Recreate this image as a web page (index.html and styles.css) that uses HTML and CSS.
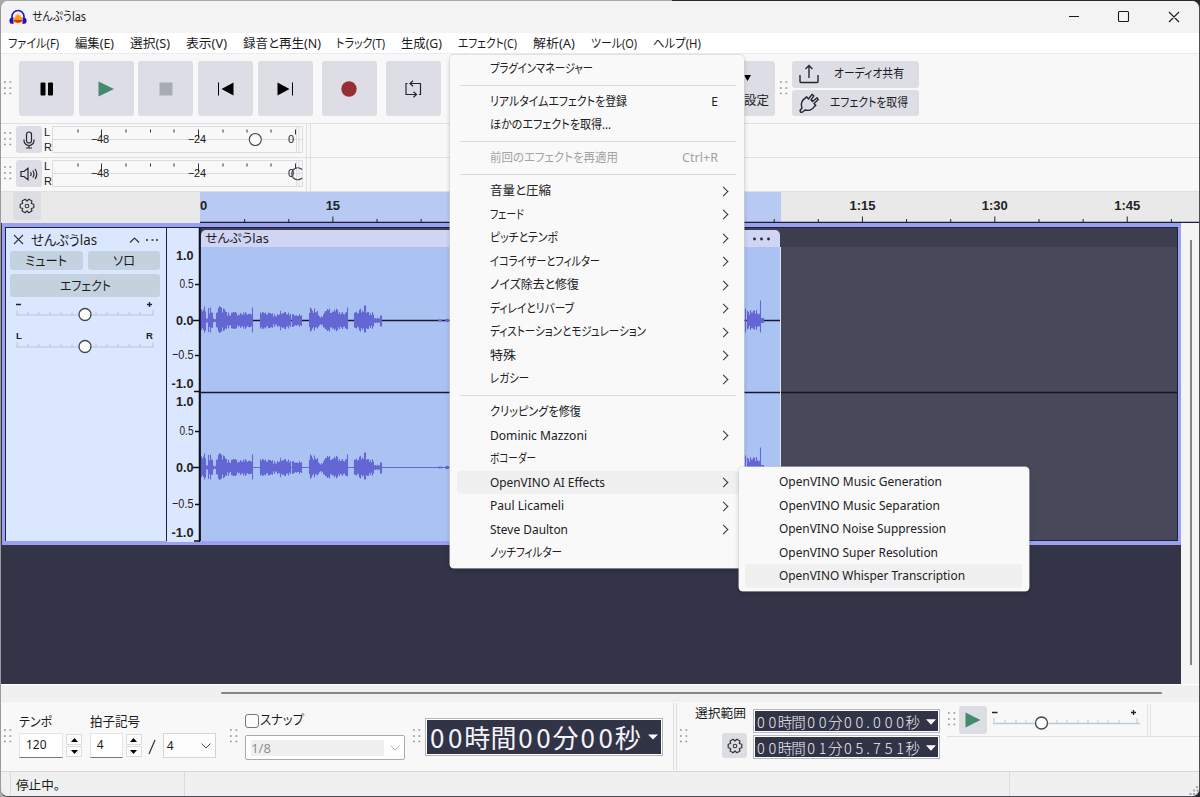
FILE: index.html
```
<!DOCTYPE html>
<html lang="ja">
<head>
<meta charset="utf-8">
<title>せんぷうlas</title>
<link rel="stylesheet" href="styles.css">
</head>
<body>
<svg class="defs" width="0" height="0">
  <symbol id="gear" viewBox="-8 -8 16 16"><path d="M6.8-1.7V1.7L4.3 2.5L4.9 5L1.9 6.7L0 5L-1.9 6.7L-4.9 5L-4.3 2.5L-6.8 1.7V-1.7L-4.3-2.5L-4.9-5L-1.9-6.7L0-5L1.9-6.7L4.9-5L4.3-2.5Z" fill="none" stroke="#33343c" stroke-width="1.2" stroke-linejoin="round"/><circle r="1.8" fill="none" stroke="#33343c" stroke-width="1.1"/></symbol>
  <symbol id="grip" viewBox="0 0 8 14"><path d="M0 1h1.700M5.500 1h1.700M0 7h1.700M5.500 7h1.700M0 12.500h1.700M5.500 12.500h1.700" stroke="#8d8f99" stroke-width="1.7"/></symbol>
</svg>
<div class="window">
  <header class="titlebar">
    <svg class="logo" width="18" height="16" viewBox="0 0 18 16"><path d="M3 10V7.500A6 6 0 0 1 15 7.500V10" fill="none" stroke="#1a1ad6" stroke-width="1.700"/><path d="M4.500 8.500v6.500l-3-.5C0 13.500 0 10 1.500 9zM13.500 8.500v6.500l3-.5c1.500-1 1.500-4.500 0-5.500z" fill="#1515c8"/><path d="M4 11l1-3 1 1 1-4 1 2 1-3 1.200 3 1-2 .8 4 1-1 1 3-1 2-2 1H7l-2-1z" fill="#fb9a13"/><path d="M4 11h10l-1.500 1.500-2 .5-1.500 1-1.500-1-2-.5z" fill="#e42b12"/></svg>
    <span class="fit title" data-w="54">せんぷうlas</span>
    <svg class="winctl" width="112" height="14" viewBox="0 0 112 14"><path d="M1 6.500h10M50.500 2.500q0-1 1-1h8q1 0 1 1v8q0 1-1 1h-8q-1 0-1-1zM101 2l10 10M111 2l-10 10" fill="none" stroke="#1a1a1a" stroke-width="1.100"/></svg>
  </header>
  <nav class="menubar">
    <span class="fit" data-w="51">ファイル(F)</span><span class="fit" data-w="39">編集(E)</span><span class="fit" data-w="40">選択(S)</span><span class="fit" data-w="41">表示(V)</span><span class="fit" data-w="78">録音と再生(N)</span><span class="fit" data-w="49">トラック(T)</span><span class="fit" data-w="41">生成(G)</span><span class="fit" data-w="59">エフェクト(C)</span><span class="fit" data-w="42">解析(A)</span><span class="fit" data-w="46">ツール(O)</span><span class="fit" data-w="48">ヘルプ(H)</span>
  </nav>
  <section class="toolbar">
    <svg class="grip" width="8" height="14"><use href="#grip"/></svg>
    <div class="transport">
      <button class="tool"><svg width="16" height="16"><rect x="1.500" y="1.500" width="5" height="13" rx="1"/><rect x="9" y="1.500" width="5" height="13" rx="1"/></svg></button>
      <button class="tool"><svg width="16" height="16"><path d="M.5.500 16 8 .5 15.500z" fill="#46896c"/></svg></button>
      <button class="tool"><svg width="14" height="14"><rect x=".5" y=".5" width="13" height="13" fill="#a7abb5"/></svg></button>
      <button class="tool"><svg width="18" height="14"><path d="M1.500 .5v13" stroke="#000"/><path d="M16.500 .5v13L4.500 7z"/></svg></button>
      <button class="tool"><svg width="18" height="14"><path d="M16.500 .5v13" stroke="#000"/><path d="M1.500 .5v13L13.500 7z"/></svg></button>
      <button class="tool rec"><svg width="16" height="16"><circle cx="8" cy="8" r="7.700" fill="#952f35"/></svg></button>
      <button class="tool loop"><svg width="18" height="18" viewBox="0 0 18 18" fill="none" stroke="#26272e" stroke-width="1.200"><path d="M3.500 3.500H2V14.500H12M15 14.500h1.500V3.500H6M9 .8 6 3.500l3 2.700M9.500 11.800l3 2.700-3 2.700"/></svg></button>
    </div>
    <svg class="grip" width="8" height="14"><use href="#grip"/></svg>
    <div class="setup"><svg width="7" height="6"><path d="M0 0h7L3.500 6z"/></svg><span class="fit" data-w="25">設定</span></div>
    <svg class="grip grip-share" width="8" height="14"><use href="#grip"/></svg>
    <div class="share">
      <div class="sharebtn"><svg width="20" height="20" viewBox="0 0 20 20" fill="none" stroke="#25262c" stroke-width="1.400"><path d="M1 11v6.500q0 1 1 1h16q1 0 1-1V11M10 14V1.500M6.500 5 10 1.500 13.500 5"/></svg><span class="fit" data-w="70">オーディオ共有</span></div>
      <div class="sharebtn"><svg width="20" height="20" viewBox="0 0 20 20" fill="none" stroke="#25262c" stroke-width="1.400" stroke-linejoin="round"><path d="M1 17.500 3 15C1.500 11 3 6.500 6.500 5L7.500 3.800 9.500 6 13 1.300 14.800 2.800 12 6.800 13.500 8.500 18 4.800 19.300 6.600 15 10.500 16.800 12.500 15.500 13.300C13.500 16.500 9.500 18 6 17L3.200 19.200Q1.500 20 1 17.500Z"/></svg><span class="fit" data-w="78">エフェクトを取得</span></div>
    </div>
  </section>
  <section class="meterrow">
    <svg class="grip" width="8" height="14"><use href="#grip"/></svg>
    <span class="mbtn"><svg width="14" height="18" viewBox="0 0 14 18" fill="none" stroke="#25262c" stroke-width="1.200"><rect x="4.500" y="1" width="5" height="11" rx="2.500"/><path d="M2 8.500v1A5 5 0 0 0 12 9.500v-1M7 14.500v2.500M4 17h6"/></svg></span>
    <svg class="meter" width="260" height="33"><circle cx="211.300" cy="15.500" r="6" fill="#fbfbfb" stroke="#444" stroke-width="1.100"/></svg>
    <span class="rowend"></span>
  </section>
  <section class="meterrow">
    <svg class="grip" width="8" height="14"><use href="#grip"/></svg>
    <span class="mbtn"><svg width="18" height="14" viewBox="0 0 18 14" fill="none" stroke="#25262c" stroke-width="1.200"><path d="M1 4.500h3L8 1.300v11.400L4 9.500H1zM10.500 5q1.300 2 0 4M12.800 3.500q2.400 3.500 0 7M15 2q3.600 5 0 10"/></svg></span>
    <svg class="meter" width="260" height="33"><path d="M258 11.500A6 6 0 1 0 258 20" fill="none" stroke="#444" stroke-width="1.200"/></svg>
    <span class="rowend"></span>
  </section>
  <section class="timeline">
    <span class="gearbtn"><svg width="16" height="16"><use href="#gear"/></svg></span>
    <svg id="ruler" class="ruler" width="999" height="31"><rect width="581" height="30" fill="#b8c9f4"/></svg>
  </section>
  <section class="workspace">
    <div class="canvas">
      <div class="track">
        <aside class="panel">
          <div class="phead"><svg width="11" height="11"><path d="M1 1l9 9M10 1l-9 9" stroke="#333640" stroke-width="1.100"/></svg><span class="fit" data-w="66">せんぷうlas</span><svg class="more" width="30" height="10"><path d="M2 7.500 6.500 3 11 7.500" fill="none" stroke="#333640" stroke-width="1.200"/><path d="M18 5h2M23.500 5h2M28 5h2" stroke="#555963" stroke-width="1.800"/></svg></div>
          <div class="pair"><span class="pbtn"><b class="fit" data-w="42">ミュート</b></span><span class="pbtn"><b class="fit" data-w="22">ソロ</b></span></div>
          <div class="pbtn wide"><b class="fit" data-w="51">エフェクト</b></div>
          <svg width="150" height="60" viewBox="0 0 150 60"><g font-family="Liberation Sans, sans-serif" font-size="9.500" font-weight="bold" fill="#222"><text x="6" y="42">L</text><text x="136" y="42">R</text></g><path d="M6 7.500h5M137 7.500h5M139.500 5v5" stroke="#222" stroke-width="1.300"/><path d="M6 18h138M6 50h138M7 13v5M18 15v3M29 15v3M40 15v3M51 15v3M62 15v3M86 15v3M97 15v3M108 15v3M119 15v3M130 15v3M143 13v5M7 45v5M18 47v3M29 47v3M40 47v3M51 47v3M62 47v3M86 47v3M97 47v3M108 47v3M119 47v3M130 47v3M143 45v5" stroke="#bcc7d1" stroke-width="1"/><g fill="#fdfdf8" stroke="#444851" stroke-width="1.300"><circle cx="75" cy="17.500" r="6"/><circle cx="75" cy="49.500" r="6"/></g></svg>
        </aside>
        <svg id="vscale" class="vscale" width="33" height="314" viewBox="0 228 33 314"></svg>
        <div class="wavearea">
          <div class="clip"><div class="cliphead"><span class="fit" data-w="64">せんぷうlas</span><svg width="18" height="4"><path d="M1.500 2h.01M8.500 2h.01M15.500 2h.01" stroke="#252735" stroke-width="2.800" stroke-linecap="round"/></svg></div>
          <svg id="wave" width="579" height="294" viewBox="201 247 579 294"></svg></div>
          <svg class="rest" width="397" height="314"><path d="M0 164.500h397" stroke="#17181f" stroke-width="1.500"/><path d="M.5 19v295" stroke="#e4e5ea"/></svg>
        </div>
      </div>
    </div>
    <div class="vscroll"><i></i></div>
  </section>
  <div class="hscroll"><i></i></div>
  <section class="bottombar">
    <svg class="grip" width="8" height="14"><use href="#grip"/></svg>
    <div class="group tempo"><label class="fit" data-w="33">テンポ</label><div class="line"><span class="num">120</span><span class="spin"><i><svg width="7" height="4"><path d="M0 4h7L3.500 0z"/></svg></i><i><svg width="7" height="4"><path d="M0 0h7L3.500 4z"/></svg></i></span></div></div>
    <div class="group sign"><label class="fit" data-w="50">拍子記号</label><div class="line"><span class="num n4">4</span><span class="spin"><i><svg width="7" height="4"><path d="M0 4h7L3.500 0z"/></svg></i><i><svg width="7" height="4"><path d="M0 0h7L3.500 4z"/></svg></i></span><svg class="slash" width="8" height="18"><path d="M1 16 7 2" stroke="#333" stroke-width="1.200"/></svg><span class="select">4<svg width="10" height="6"><path d="M.5.500 5 5 9.500.500" fill="none" stroke="#555"/></svg></span></div></div>
    <svg class="grip g2" width="8" height="14"><use href="#grip"/></svg>
    <div class="group snap"><div class="check"><i></i><span class="fit" data-w="44">スナップ</span></div><div class="combo"><span>1/8</span><svg width="10" height="6"><path d="M.5.500 5 5 9.500.500" fill="none" stroke="#bbb"/></svg></div></div>
    <svg class="grip g3" width="8" height="14"><use href="#grip"/></svg>
    <div class="bigtime"><span class="cells">00時間00分00秒</span><svg width="10" height="6"><path d="M0 .5h10L5 5.500z" fill="#fff"/></svg></div>
    <div class="divider"></div>
    <svg class="grip g4" width="8" height="14"><use href="#grip"/></svg>
    <div class="selgroup"><span class="fit" data-w="51">選択範囲</span><span class="sgear"><svg width="16" height="16"><use href="#gear"/></svg></span></div>
    <div class="times"><div class="smalltime"><span class="cells">00時間00分00.000秒</span><svg width="10" height="6"><path d="M0 .2h10L5 5.800z" fill="#fff"/></svg></div><div class="smalltime"><span class="cells">00時間01分05.751秒</span><svg width="10" height="6"><path d="M0 .2h10L5 5.800z" fill="#fff"/></svg></div></div>
    <div class="speed">
      <svg class="grip" width="8" height="14"><use href="#grip"/></svg>
      <span class="pplay"><svg width="16" height="16"><path d="M.5.500 15.500 8 .5 15.500z" fill="#46896c"/></svg></span>
      <svg class="spslider" width="150" height="28"><path d="M2 8.500h5.500M141 8.500h5M143.500 6v5" stroke="#222" stroke-width="1.300"/><path d="M3 19.500h147" stroke="#b9cbe0" stroke-width="1.500"/><path d="M4 14v5M15 16v3M26 16v3M36 16v3M67 16v3M77 16v3M88 16v3M98 16v3M108 16v3M118 16v3M129 16v3M147 14v5" stroke="#b9cbe0"/><circle cx="51.500" cy="19" r="6" fill="#fdfdfd" stroke="#444" stroke-width="1.300"/></svg>
      <span class="spend"></span>
    </div>
  </section>
  <footer class="status"><span class="msg"><span class="fit" data-w="44">停止中。</span></span><span class="s2"></span><svg class="resize" width="10" height="10"><path d="M7 1h2M4 4.500h2M7.500 4.500h2M.5 8h2M4 8h2M7.500 8h2" stroke="#aaa" stroke-width="2"/></svg></footer>
</div>

<div class="popup main">
  <div class="item"><span class="fit" data-w="103">プラグインマネージャー</span></div>
  <hr>
  <div class="item"><span class="fit" data-w="137">リアルタイムエフェクトを登録</span><kbd>E</kbd></div>
  <div class="item"><span class="fit" data-w="121">ほかのエフェクトを取得...</span></div>
  <hr>
  <div class="item off"><span class="fit" data-w="128">前回のエフェクトを再適用</span><kbd class="fit" data-w="36">Ctrl+R</kbd></div>
  <hr>
  <div class="item sub"><span class="fit" data-w="61">音量と圧縮</span></div>
  <div class="item sub"><span class="fit" data-w="34">フェード</span></div>
  <div class="item sub"><span class="fit" data-w="68">ピッチとテンポ</span></div>
  <div class="item sub"><span class="fit" data-w="110">イコライザーとフィルター</span></div>
  <div class="item sub"><span class="fit" data-w="89">ノイズ除去と修復</span></div>
  <div class="item sub"><span class="fit" data-w="84">ディレイとリバーブ</span></div>
  <div class="item sub"><span class="fit" data-w="156">ディストーションとモジュレーション</span></div>
  <div class="item sub"><span class="fit" data-w="26">特殊</span></div>
  <div class="item sub"><span class="fit" data-w="39">レガシー</span></div>
  <hr>
  <div class="item"><span class="fit" data-w="91">クリッピングを修復</span></div>
  <div class="item sub"><span class="fit" data-w="97">Dominic Mazzoni</span></div>
  <div class="item"><span class="fit" data-w="46">ボコーダー</span></div>
  <div class="item sub hot"><span class="fit" data-w="115">OpenVINO AI Effects</span></div>
  <div class="item sub"><span class="fit" data-w="74">Paul Licameli</span></div>
  <div class="item sub"><span class="fit" data-w="78">Steve Daulton</span></div>
  <div class="item"><span class="fit" data-w="72">ノッチフィルター</span></div>
</div>
<div class="popup submenu">
  <div class="item"><span class="fit" data-w="163">OpenVINO Music Generation</span></div>
  <div class="item"><span class="fit" data-w="161">OpenVINO Music Separation</span></div>
  <div class="item"><span class="fit" data-w="167">OpenVINO Noise Suppression</span></div>
  <div class="item"><span class="fit" data-w="159">OpenVINO Super Resolution</span></div>
  <div class="item hot"><span class="fit" data-w="186">OpenVINO Whisper Transcription</span></div>
</div>
<script src="app.js"></script>
</body>
</html>
```
FILE: styles.css
```
* { box-sizing: border-box; }
body { margin: 0; width: 1200px; height: 797px; overflow: hidden; background: linear-gradient(90deg, #a9a9ac 0 56%, #2a282c 56%); font: 12.5px/16px "Noto Sans", "Noto Sans CJK JP", sans-serif; color: #1c1c1e; }
.defs { position: absolute; }
svg { display: block; flex: none; }
i { font-style: normal; }
.fit { display: inline-block; white-space: nowrap; transform-origin: 0 50%; font-feature-settings: "palt"; flex: none; font-weight: normal; }
.window { width: 1200px; height: 797px; border: 1px solid #4c4c52; border-left-color: #9a9a9e; border-top: 1px solid transparent; border-radius: 8px; overflow: hidden; background: #f8f8f8; background-clip: padding-box; display: flex; flex-direction: column; }
.window > * { flex: none; }

.titlebar { height: 32px; background: #f3f3f3; display: flex; align-items: center; padding: 0 19px 0 8px; }
.title { margin-left: 5px; }
.winctl { margin-left: auto; }
.menubar { height: 20px; background: #fff; display: flex; align-items: center; gap: 15.900px; padding-left: 7px; padding-top: 2px; }

.toolbar { height: 71px; border-top: 1px solid #ececee; border-bottom: 1px solid #e0e0e2; display: flex; padding: 7px 0 0 3px; }
.toolbar .grip { margin-top: 20px; }
.transport { display: flex; margin: 0 9px 0 7px; gap: 4.700px; }
.tool { width: 55px; height: 55px; border: 0; border-radius: 3px; background: #dddee5; padding: 0; display: flex; align-items: center; justify-content: center; }
.rec { margin-left: 4.500px; }
.loop { margin-left: 4px; }
.setup { width: 100px; height: 55px; margin-left: 217px; border-radius: 3px; background: #dddee5; display: flex; flex-direction: column; align-items: flex-end; padding: 14px 6px 0 0; }
.setup svg { margin: 0 18px 12px 0; }
.toolbar .grip-share { margin-left: 5px; }
.share { margin-left: 4px; display: flex; flex-direction: column; gap: 2px; }
.sharebtn { width: 127px; height: 26.500px; border-radius: 3px; background: #dddee5; display: flex; align-items: center; padding: 0 11px 0 7px; justify-content: space-between; }
.sharebtn:first-child { padding-right: 15px; }

.meterrow { height: 34px; border-bottom: 1px solid #e0e0e2; display: flex; padding-left: 3px; }
.meterrow .grip { margin-top: 8px; }
.mbtn { width: 26px; height: 27px; margin: 2px 0 0 4px; border-radius: 3px; background: #dddee5; display: grid; place-items: center; }
.meter { margin-left: 2px; }
.rowend { width: 5px; margin-left: 2px; border: solid #e0e0e2; border-width: 0 1px; }
.timeline { height: 31px; background: #e9e9ea; display: flex; }
.gearbtn { width: 28px; height: 28px; margin: 0 159px 0 12px; border-radius: 3px; background: #dddee3; display: grid; place-items: center; }

.workspace { height: 461px; display: flex; }
.canvas { width: 1180px; background: #333447; padding-left: 1px; }
.track { height: 322px; border: solid #9aa1f0; border-width: 4px 3px; display: flex; background: #1d2040; padding: 1px 1px; }
.panel { width: 160px; height: 313px; background: #dbe7ff; padding: 3px 6px 0 4px; }
.phead { display: flex; align-items: center; height: 17px; padding-left: 3px; margin-bottom: 3px; }
.phead .fit { margin-left: 7px; font-size: 14px; }
.more { margin-left: 31px; }
.pair { display: flex; gap: 5px; }
.pbtn { flex: 1; height: 19px; border-radius: 3px; background: #c4d2e0; display: flex; align-items: center; justify-content: center; font-size: 13px; line-height: 14px; padding-bottom: 2px; }
.wide { height: 23px; margin: 4px 0 0; }
.vscale { margin-left: 1px; background: #dbe7ff; }
.wavearea { display: flex; width: 976px; margin-left: 1px; background: linear-gradient(#3d3f50 19px, #47495a 19px); }
.clip { width: 579px; padding-top: 2px; }
.cliphead { height: 17px; background: #cfd5f3; border-radius: 5px 5px 0 0; display: flex; align-items: center; justify-content: space-between; padding: 0 9px 0 4px; }
.vscroll { width: 18px; padding: 17px 0 0 9px; background: #f4f4f5; }
.vscroll i { display: block; width: 2px; height: 425px; background: #858585; }
.hscroll { height: 18px; background: #f0f0f0; border-top: 1px solid #fff; padding: 7px 0 0 220px; }
.hscroll i { display: block; width: 941px; height: 2px; background: #858585; border-radius: 1px; }

.bottombar { height: 70px; border-bottom: 1px solid #d8d8da; display: flex; padding-left: 3px; }
.bottombar > .grip { margin-top: 27px; }
.group { padding-top: 11px; display: flex; flex-direction: column; align-items: flex-start; font-size: 13px; }
.tempo { margin-left: 7px; width: 70px; }
.sign { width: 127px; margin-left: 1px; }
.line { display: flex; margin-top: 4px; }
.num { width: 44px; height: 25px; background: #fff; border: 1px solid #e5e5e5; border-bottom-color: #777; padding: 3px 6px; font-size: 12px; }
.n4 { width: 33px; }
.spin { width: 16px; margin: 1px 0 0 3px; display: flex; flex-direction: column; gap: 1px; }
.spin i { height: 11px; border: 1px solid #dcdcdc; background: #fdfdfd; display: grid; place-items: center; }
.slash { margin: 5px 7px 0 6px; }
.select { width: 53px; height: 25px; border: 1px solid #d5d5d5; background: #fdfdfd; display: flex; align-items: center; justify-content: space-between; padding: 0 4px 0 3px; font-size: 12px; }
.g2 { margin-left: 14px; }
.snap { margin-left: 7px; padding-top: 9px; width: 160px; }
.check { display: flex; gap: 1px; }
.check i { width: 14px; height: 14px; margin-top: 3px; border: 1px solid #777; border-radius: 3px; background: #fbfbfb; }
.combo { width: 160px; height: 25px; margin-top: 7px; border: 1px solid #aaa; border-radius: 2px; background: #fff; display: flex; align-items: center; justify-content: space-between; padding: 0 4px 0 5px; color: #909090; }
.combo span { width: 133px; background: #f0f0f0; }
.g3 { margin-left: 8px; }
.bigtime { width: 239px; height: 38px; margin: 16px 0 0 4px; border: 1px solid #b4b6c2; box-shadow: inset 0 0 0 1px #fff; background: #313347; color: #f4f4f8; display: flex; align-items: center; justify-content: space-between; padding: 0 4px 0 2px; font: 26px/34px "Noto Sans CJK JP", sans-serif; }
.cells { display: flex; }
.cells span { width: 18px; text-align: center; flex: none; display: flex; justify-content: center; }
.cells .k { width: 26.200px; }
.divider { width: 4px; height: 67px; margin: 1px 3px 0 10px; border: solid #dcdce4; border-width: 0 1px; }
.selgroup { width: 52px; margin-left: 7px; padding-top: 4px; }
.sgear { width: 25px; height: 25px; margin: 11px 0 0 27px; background: #dddee3; border-radius: 3px; display: grid; place-items: center; }
.times { margin: 7px 0 0 6px; display: flex; flex-direction: column; gap: 2px; }
.smalltime { width: 187px; height: 24px; border: 1px solid #b4b6c2; box-shadow: inset 0 0 0 1px #fff; background: #313347; color: #eeeef3; display: flex; align-items: center; justify-content: space-between; padding: 2px 3px 0 1px; font: 300 14.500px/20px "Noto Sans CJK JP", sans-serif; }
.smalltime .cells span { width: 11.600px; }
.smalltime .cells .k { width: 13.500px; }
.smalltime .cells .p { width: 6px; }
.speed { height: 35px; width: 253px; margin-left: 7px; border-bottom: 1px solid #dfdfe2; display: flex; padding: 0 0 0 1px; }
.speed .grip { margin-top: 10px; }
.pplay { width: 28px; height: 28px; margin: 4px 0 0 3px; background: #dddee3; border-radius: 3px; display: grid; place-items: center; }
.spslider { margin: 2px 7px 0 3px; }
.spend { width: 4px; margin-top: 2px; border: solid #dfdfe2; border-width: 0 1px; }
.status { height: 25px; background: #f0f0f0; display: flex; padding-left: 9px; }
.msg { width: 175px; border: solid #dcdcdc; border-width: 0 1px; padding: 6px 0 0 5px; }
.s2 { width: 825px; border-right: 1px solid #dcdcdc; }
.resize { margin: 14px 0 0 auto; }

.popup { position: absolute; background: #f9f9f9; border-radius: 4px; box-shadow: 0 0 0 .5px #d5d5d8, 0 2px 5px #0003; color: #202023; }
.main { left: 450px; top: 55px; width: 294px; height: 513px; padding: 1.500px 4px 0 7px; }
.submenu { left: 739px; top: 467px; width: 290px; height: 124px; padding: 3px 7px 0 6px; }
.item { height: 23.530px; line-height: 23.500px; padding: 0 22px 0 33px; display: flex; justify-content: space-between; border-radius: 4px; font-size: 12.500px; }
.submenu .item { padding-left: 34px; }
.item kbd { font-family: inherit; font-size: 12px; }
.off { color: #a3a3a3; }
.hot { background: #f0f0f0; }
.sub::after { content: ""; width: 6px; height: 6px; border: solid #333; border-width: 1.300px 1.300px 0 0; transform: rotate(45deg); margin: 8.500px -9px 0 0; }
.popup hr { border: 0; height: 1px; margin: 4.500px 4px 4px 3px; background: #dadadb; }
```
FILE: app.js
```
document.querySelectorAll('.fit').forEach(function (el) {
  var want = +el.dataset.w, natural = el.getBoundingClientRect().width;
  el.style.width = want + 'px';
  el.style.transform = 'scaleX(' + want / natural + ')';
});

// Time readouts: one fixed cell per character.
document.querySelectorAll('.cells').forEach(function (el) {
  el.innerHTML = el.textContent.split('').map(function (c) {
    return '<span class="' + (c === '.' ? 'p' : /\d/.test(c) ? 'd' : 'k') + '">' + c + '</span>';
  }).join('');
});

// Level meter scale, drawn beneath each meter's slider knob.
document.querySelectorAll('.meter').forEach(function (el) {
  el.innerHTML = '<path d="M8.500 2.500h250v26h-250zM8.500 15.500h250M252.500 2.500v26M255 2.500v26" fill="none" stroke="#dcdcdf"/>' +
    '<path d="M34 5.500v3M57.500 5.500v8M82 5.500v3M106.500 5.500v3M130 5.500v3M154.500 5.500v8M179 5.500v3M203 5.500v3M227 5.500v3M251.500 5.500v5" stroke="#33343c"/>' +
    '<g font-family="Liberation Sans, sans-serif" font-size="11" fill="#222"><text x="0" y="12">L</text><text x="0" y="26.500">R</text><text x="47" y="18.500" textLength="18">−48</text><text x="144" y="18.500" textLength="18">−24</text><text x="244" y="18.500">0</text></g>' + el.innerHTML;
});

// Time ruler, a tick every five seconds.
var out = '', ticks = '';
for (var i = 0; i <= 22; i++) {
  var x = i * 44.13 + 0.5;
  if (i) ticks += 'M' + x + ' 30V' + (i % 3 ? 27 : 24.5);
  if (i % 3 === 0 && (i < 6 || i > 12)) {
    var s = i * 5, t = s < 60 ? '' + s : '1:' + ('0' + (s - 60)).slice(-2);
    out += i ? '<text x="' + x + '" y="18" text-anchor="middle">' + t + '</text>' : '<text x="0" y="18">0</text>';
  }
}
document.getElementById('ruler').innerHTML += '<path d="' + ticks + '" stroke="#222"/><path d="M0 30.500H999" stroke="#1b1d38" stroke-width="1.5"/><g font-family="Liberation Sans, sans-serif" font-weight="bold" font-size="13" fill="#222">' + out + '</g>';

// Amplitude scale of both channels.
var rows = [['1.0', 256, 1], ['0.5', 284, 0], ['0.0', 321, 1], ['−0.5', 355, 0], ['-1.0', 384, 1], ['1.0', 402, 1], ['0.5', 431, 0], ['0.0', 468, 1], ['−0.5', 504, 0], ['-1.0', 533, 1]];
document.getElementById('vscale').innerHTML = rows.map(function (r) {
  var w = r[2] ? (r[0].length > 3 ? 22 : 17.5) : (r[0].length > 3 ? 21.5 : 14);
  return '<text x="' + (26.5 - w) + '" y="' + (r[1] + 4) + '" textLength="' + w + '" lengthAdjust="spacingAndGlyphs" font-family="Liberation Sans, sans-serif" font-size="13" fill="#222"' + (r[2] ? ' font-weight="bold"' : '') + '>' + r[0] + '</text>';
}).join('') + '<path d="M28 284.500h5M26 320.500h7M28 355.500h5M27 391.500h6M28 431.500h5M26 467.500h7M28 504.500h5M27 541h6" stroke="#111" stroke-width="1.300"/><path d="M32.500 228v314" stroke="#111" stroke-width="1.500"/>';

// Waveform: [from, to, up, down]
var env = [[201, 205, 14, 12], [205, 206, 9, 10], [206, 208, 2, 2], [208, 213, 13, 12], [213, 216, 2, 2], [216, 226, 15, 13], [226, 237, 9, 9], [237, 252, 9, 9], [252, 253, 13, 12], [260, 273, 10, 10], [273, 280, 7, 7], [280, 291, 10, 10], [292, 302, 7, 7], [309, 312, 14, 12], [312, 318, 13, 11], [318, 324, 6, 7], [324, 338, 12, 11], [338, 347, 9, 9], [347, 348, 13, 9], [354, 364, 13, 12], [364, 366, 15, 12], [366, 374, 9, 9], [374, 380, 3, 3], [380, 382, 5, 6], [438, 442, 1, 1], [445, 449, 2, 2], [745, 746, 12, 12], [747, 760, 11, 10], [760, 761, 20, 12], [761, 764, 3, 3]];
var seed = 7, d = ['', ''];
env.forEach(function (e) {
  for (var x = e[0]; x < e[1]; x++) {
    seed = (seed * 1103515245 + 12345) % 2147483648;
    var k = e[1] - e[0] < 3 ? 1 : 0.5 + 0.5 * (seed / 2147483648);
    [320.5, 467.5].forEach(function (c, n) { d[n] += 'M' + (x + .5) + ' ' + (c - e[2] * k).toFixed(1) + 'V' + (c + e[3] * (1.3 - k > .85 ? .7 : k)).toFixed(1); });
  }
});
document.getElementById('wave').innerHTML = '<rect x="201" y="247" width="579" height="294" fill="#abc3f3"/><path d="M201 320.500H780M201 392.500H780" stroke="#17182c" stroke-width="1.500"/><path d="M201 467.500H780" stroke="#6467d3"/><path d="' + d[0] + d[1] + '" stroke="#6467d3" stroke-width="1.100"/>';
```
